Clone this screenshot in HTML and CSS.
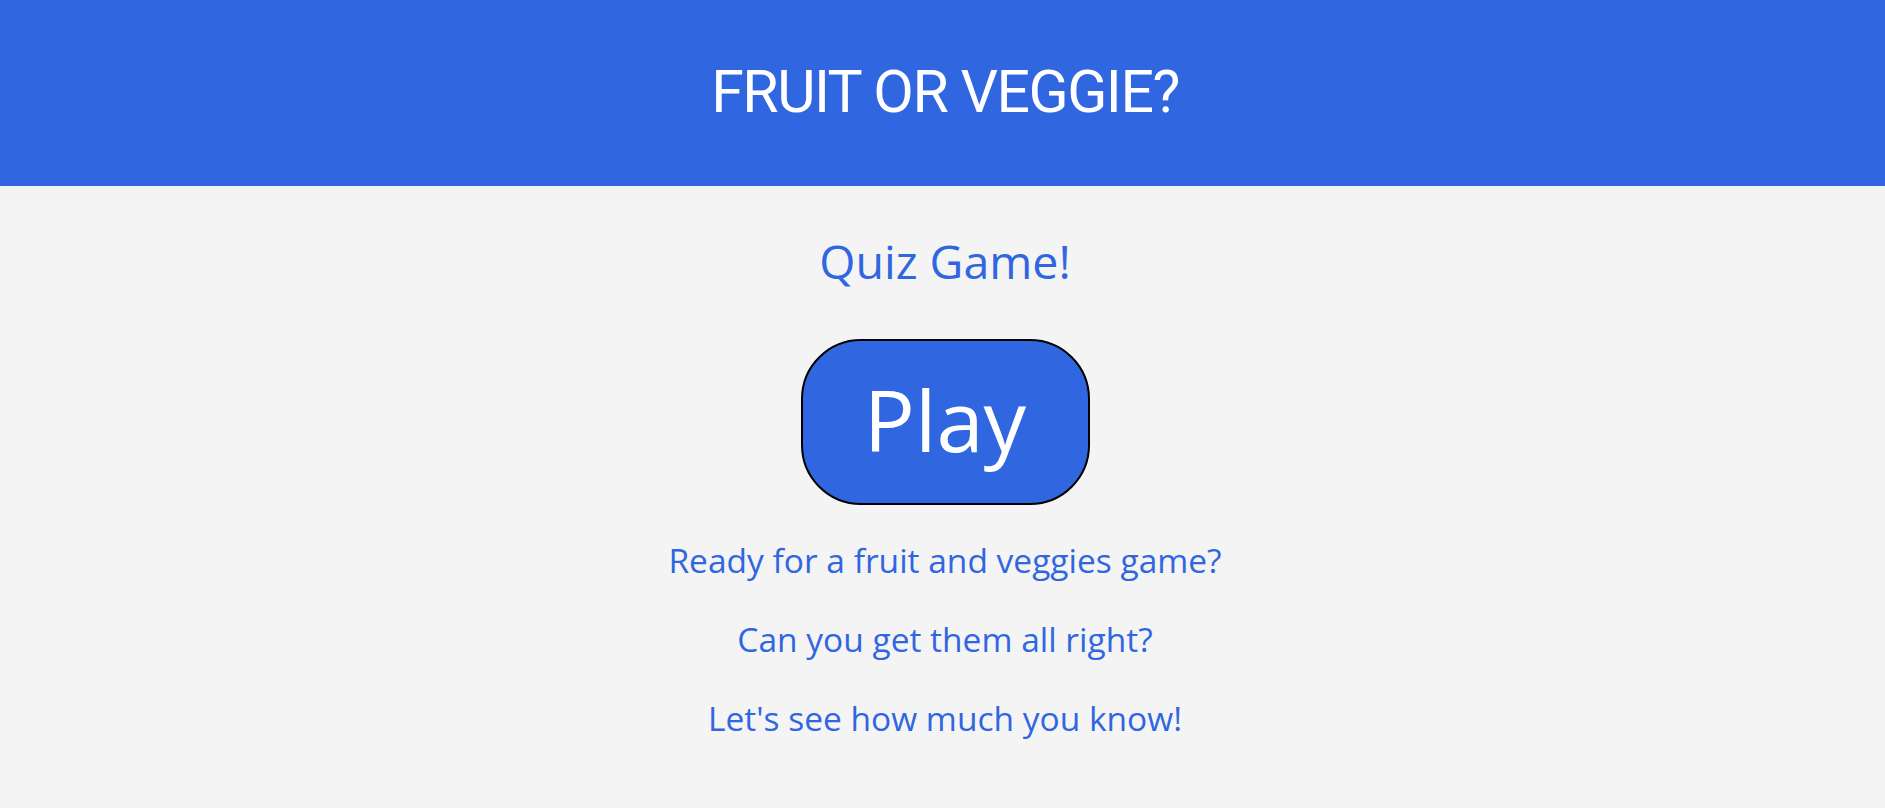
FILE: index.html
```html
<!DOCTYPE html>
<html lang="en">
<head>
<meta charset="utf-8">
<title>Fruit or Veggie?</title>
<link rel="stylesheet" href="styles.css">
</head>
<body>
<header class="topbar">
  <h1 class="title">FRUIT OR VEGGIE?</h1>
</header>
<main class="intro">
  <h2 class="subtitle">Quiz Game!</h2>
  <button class="play" type="button">Play</button>
  <div class="lines">
    <p class="line">Ready for a fruit and veggies game?</p>
    <p class="line">Can you get them all right?</p>
    <p class="line">Let's see how much you know!</p>
  </div>
</main>
</body>
</html>
```
FILE: styles.css
```css
html, body {
  margin: 0;
  padding: 0;
}
body {
  background: #f4f4f4;
  font-family: "Open Sans", "Noto Sans", sans-serif;
  color: #3066e0;
  min-height: 808px;
}
.topbar {
  height: 186px;
  background: #3066e0;
  display: flex;
  align-items: center;
  justify-content: center;
  padding-left: 5px;
}
.title {
  margin: 0;
  font-family: Roboto, "Liberation Sans", sans-serif;
  font-weight: 400;
  font-size: 59px;
  letter-spacing: -1.5px;
  line-height: 1;
  color: #ffffff;
  padding-bottom: 4px;
}
.intro {
  display: flex;
  flex-direction: column;
  align-items: center;
  padding-top: 45px;
  padding-left: 5px;
}
.subtitle {
  margin: 0;
  font-weight: 400;
  font-size: 46.5px;
  line-height: 60px;
  color: #3066e0;
}
.play {
  margin-top: 48px;
  box-sizing: border-box;
  width: 289px;
  height: 166px;
  border: 2px solid #000;
  border-radius: 60px;
  background: #3066e0;
  color: #fff;
  font-family: "Open Sans", "Noto Sans", sans-serif;
  font-size: 85px;
  line-height: 1;
  padding: 0 0 6px 0;
}
.lines {
  margin-top: 35px;
  display: flex;
  flex-direction: column;
  align-items: center;
  gap: 39px;
}
.line {
  margin: 0;
  font-size: 33.5px;
  line-height: 40px;
}
```
